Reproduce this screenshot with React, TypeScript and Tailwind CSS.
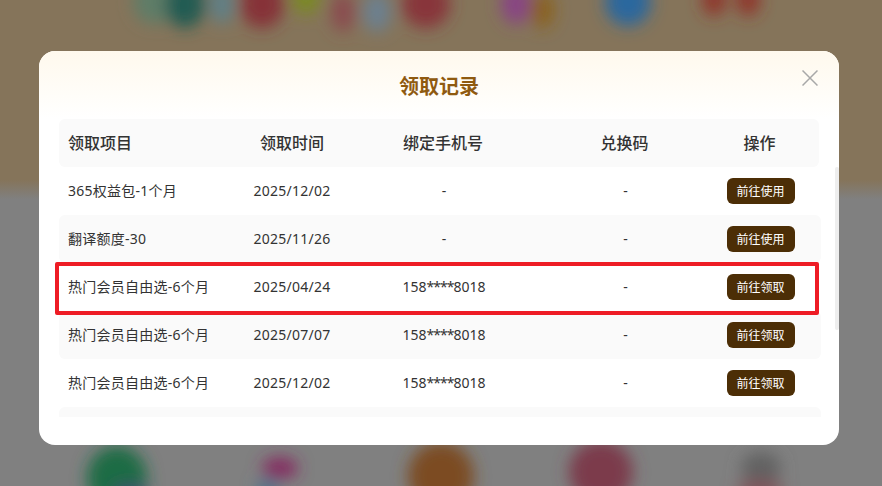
const rows = [
  { name: '365权益包-1个月', date: '2025/12/02', phone: '', action: '前往使用' },
  { name: '翻译额度-30', date: '2025/11/26', phone: '', action: '前往使用' },
  { name: '热门会员自由选-6个月', date: '2025/04/24', phone: '158-8018', action: '前往领取' },
  { name: '热门会员自由选-6个月', date: '2025/07/07', phone: '158-8018', action: '前往领取' },
  { name: '热门会员自由选-6个月', date: '2025/12/02', phone: '158-8018', action: '前往领取' },
];

// blurred page behind the mask
function Backdrop() {
  return (
    <svg className="absolute inset-0" width="882" height="486" viewBox="0 0 882 486">
      <defs>
        <linearGradient id="page" x1="0" y1="0" x2="0" y2="1">
          <stop offset="0.37" stopColor="#85745a" />
          <stop offset="0.41" stopColor="#808080" />
        </linearGradient>
        <filter id="soft" x="-40%" y="-40%" width="180%" height="180%">
          <feGaussianBlur stdDeviation="8" />
        </filter>
      </defs>
      <rect width="882" height="486" fill="url(#page)" />
      <g filter="url(#soft)">
        <ellipse cx="155" cy="2" rx="22" ry="22" fill="#5f7d68" />
        <ellipse cx="185" cy="4" rx="20" ry="24" fill="#215c52" />
        <ellipse cx="222" cy="4" rx="12" ry="20" fill="#5e8088" />
        <ellipse cx="262" cy="4" rx="22" ry="24" fill="#863238" />
        <ellipse cx="306" cy="-2" rx="14" ry="16" fill="#7a8a22" />
        <ellipse cx="343" cy="12" rx="12" ry="20" fill="#8a4c50" />
        <ellipse cx="377" cy="12" rx="14" ry="20" fill="#6c8090" />
        <ellipse cx="426" cy="4" rx="24" ry="24" fill="#88343a" />
        <ellipse cx="516" cy="4" rx="15" ry="20" fill="#884484" />
        <ellipse cx="542" cy="10" rx="12" ry="18" fill="#8a621c" />
        <ellipse cx="628" cy="2" rx="23" ry="24" fill="#2b689e" />
        <ellipse cx="714" cy="0" rx="12" ry="16" fill="#90342c" />
        <ellipse cx="748" cy="0" rx="12" ry="16" fill="#90342c" />
        <ellipse cx="117" cy="478" rx="30" ry="32" fill="#1a6c44" />
        <ellipse cx="130" cy="494" rx="18" ry="10" fill="#3c5070" />
        <ellipse cx="280" cy="468" rx="18" ry="11" fill="#842c60" />
        <ellipse cx="268" cy="488" rx="12" ry="8" fill="#44708e" />
        <ellipse cx="441" cy="476" rx="33" ry="34" fill="#7c4c20" />
        <ellipse cx="601" cy="472" rx="32" ry="32" fill="#7c3a4c" />
        <ellipse cx="761" cy="468" rx="20" ry="16" fill="#626262" />
        <ellipse cx="760" cy="490" rx="24" ry="10" fill="#80525a" />
      </g>
    </svg>
  );
}

function CloseIcon() {
  return (
    <svg width="16" height="16" viewBox="0 0 16 16" fill="none" stroke="#a8a8a8" strokeWidth="1.5">
      <path d="M0.5 0.5 L15.5 15.5 M15.5 0.5 L0.5 15.5" />
    </svg>
  );
}

function Phone({ value }: { value: string }) {
  if (!value) return <>-</>;
  const [head, tail] = value.split('-');
  return (
    <>
      {head}
      <span className="tracking-[-1px]">****</span>
      {tail}
    </>
  );
}

export default function App() {
  return (
    <div className="relative h-[486px] w-[882px] overflow-hidden font-['Noto_Sans','Noto_Sans_CJK_SC',sans-serif] text-[#333333]">
      <Backdrop />
      <div className="relative flex pl-[39px] pt-[51px]">
        <div className="relative flex h-[394px] w-[800px] flex-col overflow-hidden rounded-2xl bg-white">
          {/* title band */}
          <div className="flex h-[68px] items-center justify-center bg-[linear-gradient(180deg,#fff9ed_0%,#ffffff_100%)] pt-[4px]">
            <h2 className="text-[20px] font-bold text-[#8f5a10]">领取记录</h2>
            <button className="absolute right-[21px] top-[19px]">
              <CloseIcon />
            </button>
          </div>

          {/* table head */}
          <div className="mx-5 grid h-12 grid-cols-[188px_90px_212px_151px_119px] items-center rounded-md bg-[#fafafa] text-center text-[16px] font-medium">
            <div className="pl-[9px] text-left">领取项目</div>
            <div>领取时间</div>
            <div>绑定手机号</div>
            <div>兑换码</div>
            <div>操作</div>
          </div>

          {/* table body + scrollbar */}
          <div className="ml-5 flex h-[250px] justify-between overflow-hidden">
            <div className="w-[762px]">
              {rows.map((r, i) => (
                <div
                  key={i}
                  className={`grid h-12 grid-cols-[188px_90px_212px_151px_121px] items-center rounded-md text-center text-[14px] ${
                    i % 2 === 1 ? 'bg-[#fafafa]' : 'bg-white'
                  }`}
                >
                  <div className="whitespace-nowrap pb-[2px] pl-[9px] text-left tracking-[0.25px]">{r.name}</div>
                  <div className="whitespace-nowrap pb-[2px] tracking-[0.25px]">{r.date}</div>
                  <div className="pb-[2px] pl-[2px]"><Phone value={r.phone} /></div>
                  <div className="pb-[2px] pl-[2px]">-</div>
                  <div className="flex justify-center">
                    <button className="h-[26px] w-[68px] rounded-md bg-[#4c2e06] pt-px text-[12px] text-white">{r.action}</button>
                  </div>
                </div>
              ))}
              <div className="h-12 rounded-md bg-[#fafafa]" />
            </div>
            <div className="h-[163px] w-1 rounded-full bg-[#eeeeee]" />
          </div>

          {/* red annotation */}
          <div className="absolute left-[16px] top-[211px] h-[53px] w-[764px] rounded-[2px] border-[4px] border-[#ee1c25]" />
        </div>
      </div>
    </div>
  );
}
